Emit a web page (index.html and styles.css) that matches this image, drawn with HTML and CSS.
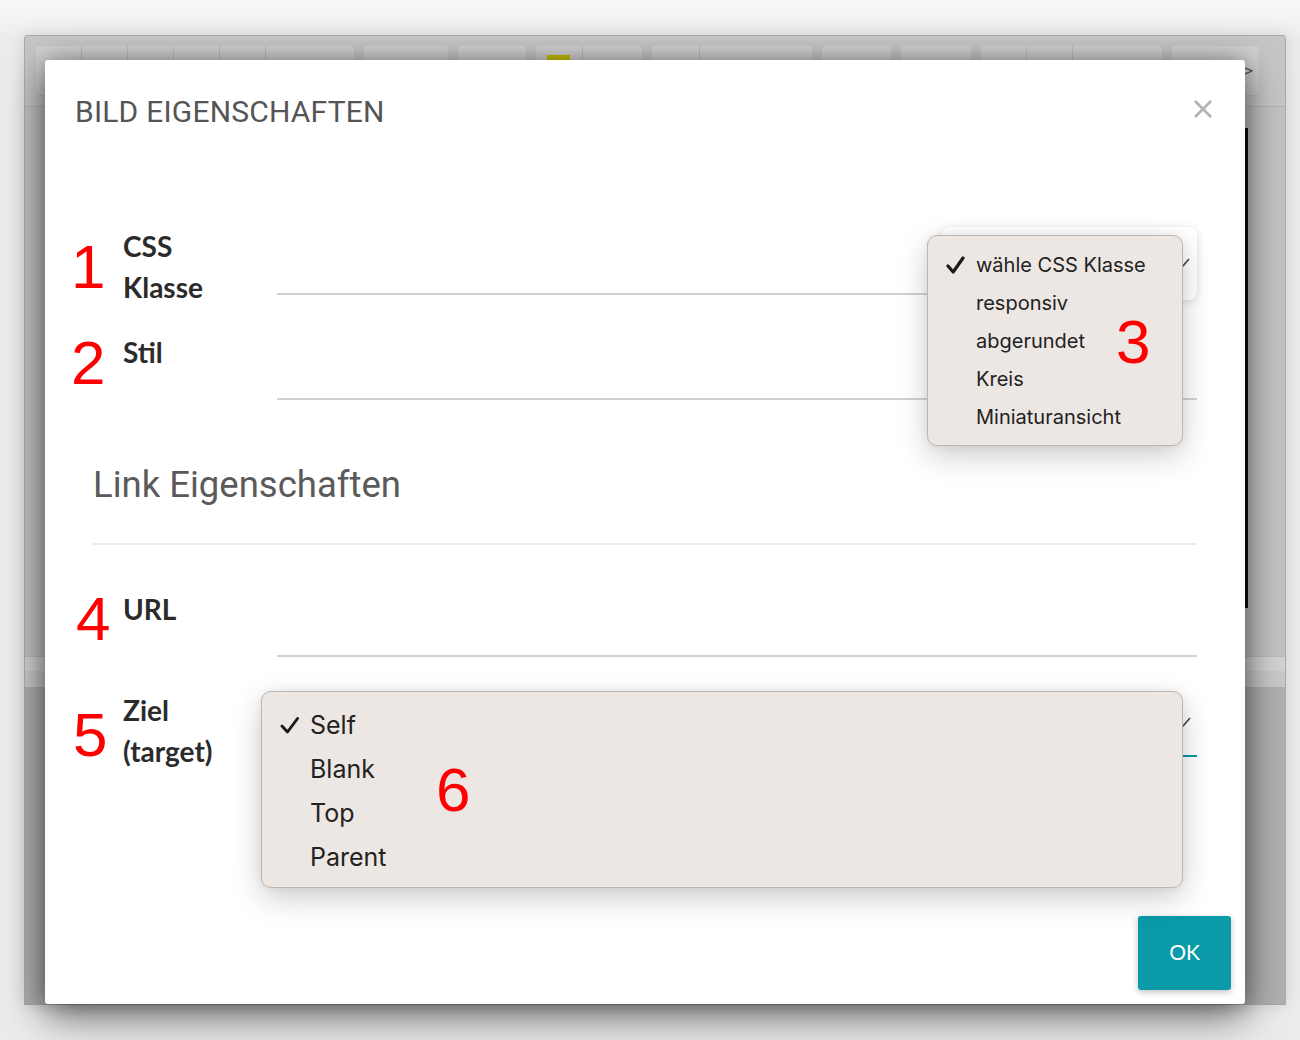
FILE: index.html
```html
<!DOCTYPE html>
<html lang="de">
<head>
<meta charset="utf-8">
<title>Bild Eigenschaften</title>
<link rel="stylesheet" href="styles.css">
</head>
<body>
<div class="editor">
  <div class="toolbar">
    <div class="tgroup"><div class="tbtn w45"></div><div class="tbtn w46"></div><div class="tbtn w46"></div><div class="tbtn w46"></div><div class="tbtn w46"></div><div class="tbtn w89"></div></div>
    <div class="tgroup"><div class="tbtn w84"></div></div>
    <div class="tgroup"><div class="tbtn w68"></div></div>
    <div class="tgroup"><div class="tbtn w46"><span class="swatch"></span></div><div class="tbtn w60"></div></div>
    <div class="tgroup"><div class="tbtn w47"></div><div class="tbtn w113"></div></div>
    <div class="tgroup"><div class="tbtn w69"></div></div>
    <div class="tgroup"><div class="tbtn w70"></div></div>
    <div class="tgroup"><div class="tbtn w45"></div><div class="tbtn w46"></div><div class="tbtn w90"></div></div>
    <div class="tgroup"><div class="tbtn w87 more">&gt;</div></div>
  </div>
  <div class="content"><div class="docimg"></div></div>
  <div class="status"></div>
  <div class="lower"></div>
</div>

<div class="modal">
  <header class="modal-head">
    <h1 class="modal-title">BILD EIGENSCHAFTEN</h1>
    <button class="close" aria-label="Schließen">
      <svg width="20" height="20" viewBox="0 0 20 20"><path d="M2 2 L18 18 M18 2 L2 18" stroke="#b3b3b3" stroke-width="2.6" fill="none"/></svg>
    </button>
  </header>

  <div class="modal-body">
    <div class="row row-css">
      <label class="lbl">CSS<br>Klasse</label>
      <div class="field field-css">
        <div class="select-box">
          <svg class="chev" width="16" height="10" viewBox="0 0 16 10"><path d="M1 1 L8 9 L15 1" stroke="#444" stroke-width="1.6" fill="none"/></svg>
        </div>
      </div>
    </div>
    <div class="row row-stil">
      <label class="lbl">Stil</label>
      <div class="field field-stil"></div>
    </div>
    <h2 class="section">Link Eigenschaften</h2>
    <div class="row row-url">
      <label class="lbl">URL</label>
      <div class="field field-url"></div>
    </div>
    <div class="row row-ziel">
      <label class="lbl">Ziel<br>(target)</label>
      <div class="field field-ziel">
        <svg class="chev chev-ziel" width="16" height="10" viewBox="0 0 16 10"><path d="M1 1 L8 9 L15 1" stroke="#444" stroke-width="1.6" fill="none"/></svg>
      </div>
    </div>
  </div>

  <footer class="modal-foot">
    <button class="ok">OK</button>
  </footer>

  <ul class="menu menu-css">
    <li class="checked"><svg class="check" width="19" height="18" viewBox="0 0 19 18"><path d="M2 10 L7.2 16 L17 2" stroke="#1a1a1a" stroke-width="3.2" fill="none" stroke-linecap="round" stroke-linejoin="round"/></svg>wähle CSS Klasse</li>
    <li>responsiv</li>
    <li>abgerundet</li>
    <li>Kreis</li>
    <li>Miniaturansicht</li>
  </ul>

  <ul class="menu menu-ziel">
    <li class="checked"><svg class="check" width="19" height="18" viewBox="0 0 19 18"><path d="M2 10 L7.5 16 L17.5 2.5" stroke="#1a1a1a" stroke-width="2.9" fill="none" stroke-linecap="round" stroke-linejoin="round"/></svg>Self</li>
    <li>Blank</li>
    <li>Top</li>
    <li>Parent</li>
  </ul>

  <span class="mark m1">1</span>
  <span class="mark m2">2</span>
  <span class="mark m3">3</span>
  <span class="mark m4">4</span>
  <span class="mark m5">5</span>
  <span class="mark m6">6</span>
</div>
</body>
</html>
```

FILE: styles.css
```css
* { box-sizing: border-box; }
html, body { margin: 0; padding: 0; }
body {
  width: 1300px;
  height: 1040px;
  overflow: hidden;
  position: relative;
  background: linear-gradient(180deg, #f8f8f8 0, #ececec 40px, #ececec 100%);
  font-family: "Lato", "Liberation Sans", sans-serif;
}

/* ---------- editor behind the dialog ---------- */
.editor {
  margin: 35px 0 0 24px;
  width: 1262px;
  height: 970px;
  border: 1px solid #ababab;
  border-radius: 3px 3px 0 0;
  background: #c6c6c6;
  display: flex;
  flex-direction: column;
  overflow: hidden;
  box-shadow: 0 0 16px rgba(0, 0, 0, 0.12);
}
.toolbar {
  flex: none;
  height: 71px;
  display: flex;
  gap: 10px;
  padding: 10px 0 0 11px;
  background: #c6c6c6;
  border-bottom: 1px solid #b2b2b2;
}
.tgroup {
  height: 49px;
  display: flex;
  border-radius: 4px;
  overflow: hidden;
  background: linear-gradient(180deg, #d2d2d2, #cbcbcb);
  box-shadow: 0 1px 1px rgba(0, 0, 0, 0.08);
}
.tbtn { height: 100%; border-left: 1px solid #bdbdbd; }
.tbtn:first-child { border-left: none; }
.w45 { width: 45px; } .w46 { width: 46px; } .w47 { width: 47px; }
.w60 { width: 60px; } .w68 { width: 68px; } .w69 { width: 69px; }
.w70 { width: 70px; } .w84 { width: 84px; } .w87 { width: 87px; }
.w89 { width: 89px; } .w90 { width: 90px; } .w113 { width: 113px; }
.swatch {
  display: block;
  margin: 9px 0 0 11px;
  width: 23px;
  height: 16px;
  background: #c9c200;
}
.more {
  display: flex;
  align-items: center;
  justify-content: flex-end;
  padding-right: 5px;
  font-family: "DejaVu Sans", sans-serif;
  font-size: 15px;
  color: #555;
}
.content {
  flex: none;
  height: 549px;
  padding-top: 21px;
  background: #c3c3c3;
}
.docimg {
  margin-left: 220px;
  width: 1003px;
  height: 480px;
  background: #0c0e0a;
}
.status {
  flex: none;
  height: 31px;
  border-top: 1px solid #bcbcbc;
  background: linear-gradient(180deg, #d3d3d3 0, #d3d3d3 14px, #cacaca 14px, #cacaca 100%);
}
.lower { flex: 1; background: #b0b0b0; }

/* ---------- dialog ---------- */
.modal {
  position: absolute;
  left: 45px;
  top: 60px;
  width: 1200px;
  height: 944px;
  background: #fff;
  border-radius: 3px;
  display: flex;
  flex-direction: column;
  box-shadow: 0 14px 40px rgba(0, 0, 0, 0.5), 0 0 22px rgba(0, 0, 0, 0.28);
}
.modal-head {
  display: flex;
  justify-content: space-between;
  align-items: flex-start;
  padding: 35px 32px 0 30px;
}
.modal-title {
  margin: 0;
  font-family: "Roboto", sans-serif;
  font-weight: 400;
  font-size: 30px;
  letter-spacing: 0.2px;
  line-height: 34px;
  color: #555;
}
.close {
  margin-top: 4px;
  padding: 0;
  border: 0;
  background: none;
  width: 20px;
  height: 20px;
  display: block;
}
.close svg { display: block; }

.modal-body { padding: 0 48px 0 78px; }
.row {
  display: grid;
  grid-template-columns: 154px 1fr;
  align-items: start;
}
.lbl {
  font-family: "Lato", sans-serif;
  font-weight: 700;
  font-size: 28px;
  line-height: 41px;
  color: #2b2b2b;
}
.field {
  position: relative;
  border-bottom: 2px solid #d2d2d2;
}
.row-css { margin-top: 97px; }
.field-css { height: 69px; }
.row-stil { margin-top: 24px; }
.field-stil { height: 68px; }
.row-url { margin-top: 44px; }
.field-url { height: 68px; }
.row-ziel { margin-top: 33px; }
.field-ziel { height: 67px; border-bottom-color: #0b97a6; }

.section {
  margin: 64px 0 0 -30px;
  padding: 0 0 37px 0;
  border-bottom: 2px solid #ececec;
  font-family: "Roboto", sans-serif;
  font-weight: 400;
  font-size: 36.5px;
  line-height: 42px;
  color: #5a5a5a;
}

.select-box {
  position: absolute;
  right: 0;
  top: 1px;
  width: 255px;
  height: 73px;
  background: #fff;
  border-radius: 8px;
  box-shadow: 0 2px 10px rgba(0, 0, 0, 0.14);
}
.chev { position: absolute; display: block; }
.select-box .chev { right: 7px; top: 31px; }
.chev-ziel { right: 6px; top: 27px; }

.modal-foot {
  margin-top: auto;
  display: flex;
  justify-content: flex-end;
  padding: 0 14px 14px 0;
}
.ok {
  width: 93px;
  height: 74px;
  padding: 0 0 3px 0;
  border: 0;
  border-radius: 3px;
  background: #0a9aa8;
  color: #fff;
  font-family: "Lato", sans-serif;
  font-size: 21px;
  box-shadow: 0 2px 6px rgba(0, 0, 0, 0.25);
}

/* ---------- open select menus ---------- */
.menu {
  position: absolute;
  margin: 0;
  list-style: none;
  background: #ede7e4;
  border: 1px solid #bdb6b3;
  border-radius: 10px;
  box-shadow: 0 10px 30px rgba(0, 0, 0, 0.2), 0 0 8px rgba(0, 0, 0, 0.06);
  font-family: "Inter", "Noto Sans", sans-serif;
  color: #222;
  z-index: 5;
}
.menu li { position: relative; }
.menu-css {
  left: 882px;
  top: 175px;
  width: 256px;
  height: 211px;
  padding: 10px 0 0 48px;
  font-size: 20px;
}
.menu-css li { height: 38px; line-height: 38px; }
.menu-css .check { position: absolute; left: -30px; top: 10px; }
.menu-ziel {
  left: 216px;
  top: 631px;
  width: 922px;
  height: 197px;
  padding: 11px 0 0 48px;
  font-size: 25px;
}
.menu-ziel li { height: 44px; line-height: 44px; }
.menu-ziel .check { position: absolute; left: -30px; top: 13px; }

/* ---------- red annotation numbers ---------- */
.mark {
  position: absolute;
  font-family: "Liberation Sans", Arial, sans-serif;
  font-size: 62px;
  line-height: 62px;
  color: #ff0000;
  z-index: 6;
}
.m1 { left: 26px; top: 176px; }
.m2 { left: 26px; top: 272px; }
.m3 { left: 1071px; top: 251px; }
.m4 { left: 31px; top: 528px; }
.m5 { left: 28px; top: 644px; }
.m6 { left: 391px; top: 699px; }
```
